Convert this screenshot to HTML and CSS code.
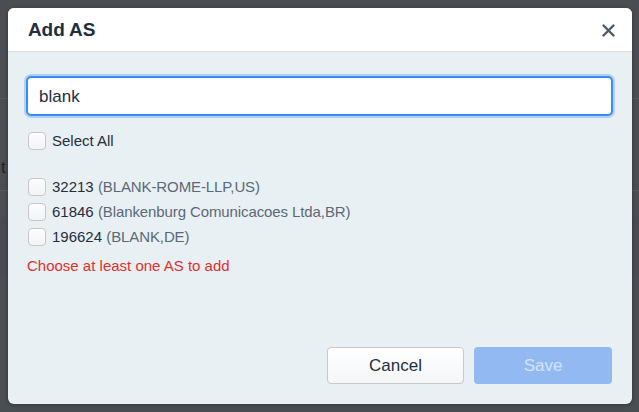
FILE: index.html
```html
<!DOCTYPE html>
<html>
<head>
<meta charset="utf-8">
<link rel="stylesheet" href="styles.css">
</head>
<body>
<div class="backdrop">
  <div class="bg-lines">
    <div class="bg-line l1"></div>
    <div class="bg-line l2"></div>
    <div class="bg-text">t</div>
    <div class="bg-band"></div>
  </div>
  <div class="modal">
    <div class="modal-header">
      <h2 class="title">Add AS</h2>
      <button class="close" aria-label="Close">
        <svg width="13" height="13" viewBox="0 0 13 13"><path d="M1.5 1.5 L11.5 11.5 M11.5 1.5 L1.5 11.5" stroke="#4a5a6c" stroke-width="2.4" stroke-linecap="round"/></svg>
      </button>
    </div>
    <div class="modal-body">
      <input class="search" type="text" value="blank">
      <label class="check select-all"><span class="box"></span><span class="lbl">Select All</span></label>
      <div class="list">
        <label class="check"><span class="box"></span><span class="lbl">32213 <span class="muted">(BLANK-ROME-LLP,US)</span></span></label>
        <label class="check"><span class="box"></span><span class="lbl">61846 <span class="muted">(Blankenburg Comunicacoes Ltda,BR)</span></span></label>
        <label class="check"><span class="box"></span><span class="lbl">196624 <span class="muted">(BLANK,DE)</span></span></label>
      </div>
      <div class="error">Choose at least one AS to add</div>
    </div>
    <div class="modal-footer">
      <button class="btn cancel">Cancel</button>
      <button class="btn save">Save</button>
    </div>
  </div>
</div>
</body>
</html>
```
FILE: styles.css
```css
html, body {
  margin: 0;
  padding: 0;
}
body {
  background: #4a4d52;
  font-family: "Liberation Sans", Arial, sans-serif;
  width: 639px;
  height: 412px;
  overflow: hidden;
}
.backdrop {
  position: relative;
  width: 639px;
  height: 412px;
  padding: 8px 7px 8px 8px;
  box-sizing: border-box;
}
.bg-lines {
  position: absolute;
  inset: 0;
}
.bg-line {
  position: absolute;
  left: 0;
  right: 0;
  height: 1px;
  background: #55585d;
}
.l1 { top: 98px; }
.l2 { top: 190px; }
.bg-text {
  position: absolute;
  left: 1px;
  top: 158px;
  color: #222;
  font-size: 17px;
}
.bg-band {
  position: absolute;
  left: 0;
  right: 0;
  top: 217px;
  height: 56px;
  background: #474b52;
}
.modal {
  position: relative;
  width: 624px;
  height: 396px;
  background: #e9f0f3;
  border-radius: 6px;
  display: flex;
  flex-direction: column;
  overflow: hidden;
  box-shadow: 0 1px 4px rgba(0,0,0,0.3);
}
.modal-header {
  height: 43px;
  background: #fff;
  border-bottom: 1px solid #dbe1e5;
  display: flex;
  align-items: center;
  justify-content: space-between;
  padding: 0 17px 0 20px;
}
.title {
  margin: 0;
  font-size: 19px;
  font-weight: bold;
  color: #1f2e40;
  letter-spacing: -0.1px;
}
.close {
  border: 0;
  background: none;
  padding: 0;
  width: 13px;
  height: 13px;
  display: flex;
  margin-top: 1px;
}
.modal-body {
  flex: 1;
  padding: 24px 19px 0 18px;
  display: flex;
  flex-direction: column;
}
.search {
  height: 40px;
  box-sizing: border-box;
  border: 2px solid #3b8cf5;
  border-radius: 5px;
  box-shadow: 0 0 0 2px rgba(59,140,245,0.3);
  background: #fff;
  padding: 1px 11px 0;
  font-family: inherit;
  font-size: 17px;
  color: #1f2e40;
  outline: none;
}
.check {
  display: flex;
  align-items: center;
  height: 25px;
  padding-left: 2px;
  font-size: 15px;
  color: #1f2e40;
}
.select-all {
  margin-top: 12px;
}
.box {
  width: 16px;
  height: 16px;
  border: 1px solid #c3c8cd;
  border-radius: 4px;
  background: linear-gradient(#fdfdfd, #f1f3f5);
  margin-right: 6px;
  flex: none;
}
.muted {
  color: #5b6977;
  letter-spacing: -0.1px;
}
.list {
  margin-top: 21px;
  display: flex;
  flex-direction: column;
}
.error {
  margin-top: 7px;
  color: #e0302e;
  font-size: 15px;
  height: 20px;
  line-height: 20px;
  padding-left: 1px;
}
.modal-footer {
  display: flex;
  justify-content: flex-end;
  gap: 10px;
  padding: 0 20px 20px 0;
}
.btn {
  height: 37px;
  border-radius: 4px;
  font-family: inherit;
  font-size: 17px;
  box-sizing: border-box;
}
.cancel {
  width: 137px;
  border: 1px solid #c6cacd;
  background: linear-gradient(#ffffff, #f4f6f8);
  color: #1f2e40;
}
.save {
  width: 138px;
  border: 0;
  background: #92b9f2;
  color: #d3e3fa;
}
```
